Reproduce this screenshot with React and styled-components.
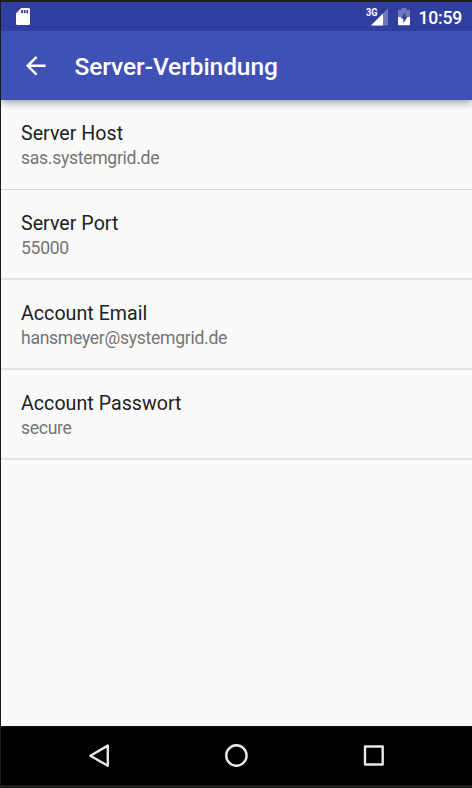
import React from "react";
import styled, { createGlobalStyle } from "styled-components";

const GlobalStyle = createGlobalStyle`
  * { box-sizing: border-box; }
  body { margin: 0; background: #1b191a; font-family: Roboto, sans-serif; }
  svg { display: block; flex: none; }
`;

const Device = styled.div`
  width: 472px;
  height: 788px;
  padding: 2px 0 3px 1px;
  background: #1f1c1d;
  display: flex;
  flex-direction: column;
  overflow: hidden;
`;

const StatusBar = styled.div`
  height: 29px;
  flex: none;
  display: flex;
  align-items: flex-start;
  padding: 6px 10px 0 15px;
  background: #303f9f;
  color: #fff;
  z-index: 2;
`;

const StatusIcons = styled.div`
  display: flex;
  margin-left: auto;
`;

const BatterySlot = styled.div`
  margin-left: 9px;
`;

const NetworkLabel = styled.text`
  font: 700 10px Roboto, sans-serif;
  fill: #fff;
`;

const Clock = styled.span`
  width: 43.5px;
  margin-left: 8.5px;
  font-size: 17.6px;
  font-weight: 500;
  letter-spacing: -0.2px;
  line-height: 20px;
  white-space: nowrap;
`;

const AppBar = styled.header`
  height: 69px;
  flex: none;
  display: flex;
  align-items: center;
  padding-left: 19.5px;
  background: #3f51b5;
  color: #fff;
  box-shadow: 0 2px 8px rgba(0, 0, 0, 0.42);
  z-index: 1;
`;

const Title = styled.h1`
  margin: 3px 0 0 24.5px;
  font-size: 24.5px;
  font-weight: 500;
  letter-spacing: -0.08px;
  line-height: 30px;
`;

const Settings = styled.main`
  flex: 1;
  background: #fafafa;
`;

const Preference = styled.div`
  height: 90px;
  padding: 21px 20px 0;
  border-bottom: 2px solid #e3e3e3;

  &:first-child {
    border-bottom: 1px solid #d9d9d9;
  }
`;

const Name = styled.div`
  font-size: 19.63px;
  letter-spacing: 0.03px;
  line-height: 25px;
  color: #212121;
`;

const Value = styled.div`
  font-size: 17.6px;
  letter-spacing: -0.3px;
  line-height: 24px;
  color: #757575;
`;

const NavBar = styled.nav`
  height: 59px;
  flex: none;
  display: flex;
  justify-content: center;
  align-items: center;
  gap: 109px;
  background: #000;
  border-top: 1px solid #111;
`;

const preferences = [
  { name: "Server Host", value: "sas.systemgrid.de" },
  { name: "Server Port", value: "55000" },
  { name: "Account Email", value: "hansmeyer@systemgrid.de" },
  { name: "Account Passwort", value: "secure" },
];

const SdCard = () => (
  <svg width="14" height="17" viewBox="0 0 14 17">
    <path
      fill="#fff"
      fillRule="evenodd"
      d="M5.3 0H12.5Q14 0 14 1.5V15.5Q14 17 12.5 17H1.5Q0 17 0 15.5V5.2ZM5.2 2V5.2H6.9V2ZM7.8 2V5.2H9.5V2ZM10.4 2V5.2H12.1V2Z"
    />
  </svg>
);

const Signal = () => (
  <svg width="24" height="18" viewBox="0 0 24 18">
    <path fill="#fff" fillOpacity=".3" d="M23 .5V17.5H6Z" />
    <path fill="#fff" d="M18 5.5V17.5H6Z" />
    <NetworkLabel x="1" y="8" textLength="11.5" lengthAdjust="spacingAndGlyphs">3G</NetworkLabel>
  </svg>
);

const Battery = () => (
  <svg width="12" height="18" viewBox="0 0 12 18">
    <path fill="#fff" fillOpacity=".3" d="M3.5 0H8.5V1.7H11Q12 1.7 12 2.7V9H0V2.7Q0 1.7 1 1.7H3.5Z" />
    <path fill="#fff" d="M0 9H12V16.3Q12 17.3 11 17.3H1Q0 17.3 0 16.3Z" />
    <path fill="#303f9f" d="M7.4 4.2 2.6 10.6H5.3V15.2L9.6 8.6H7.1Z" />
  </svg>
);

const BackArrow = () => (
  <svg width="29.5" height="29.5" viewBox="0 0 24 24">
    <path fill="#fff" d="M20 11H7.83l5.59-5.59L12 4l-8 8 8 8 1.41-1.41L7.83 13H20z" />
  </svg>
);

const NavIcon = ({ children }) => (
  <svg width="28" height="28" viewBox="0 0 28 28" fill="none" stroke="#e8e8e8" strokeWidth="2.4" strokeLinejoin="round">
    {children}
  </svg>
);

export default function App() {
  return (
    <>
      <GlobalStyle />
      <Device>
        <StatusBar>
          <SdCard />
          <StatusIcons>
            <Signal />
            <BatterySlot>
              <Battery />
            </BatterySlot>
            <Clock>10:59</Clock>
          </StatusIcons>
        </StatusBar>
        <AppBar>
          <BackArrow />
          <Title>Server-Verbindung</Title>
        </AppBar>
        <Settings>
          {preferences.map(({ name, value }) => (
            <Preference key={name}>
              <Name>{name}</Name>
              <Value>{value}</Value>
            </Preference>
          ))}
        </Settings>
        <NavBar>
          <NavIcon>
            <path d="M4.4 13.7 21.8 3.6V23.8Z" />
          </NavIcon>
          <NavIcon>
            <circle cx="13.4" cy="13.5" r="10.2" />
          </NavIcon>
          <NavIcon>
            <path d="M5 4.5H22.7V22.5H5Z" />
          </NavIcon>
        </NavBar>
      </Device>
    </>
  );
}
